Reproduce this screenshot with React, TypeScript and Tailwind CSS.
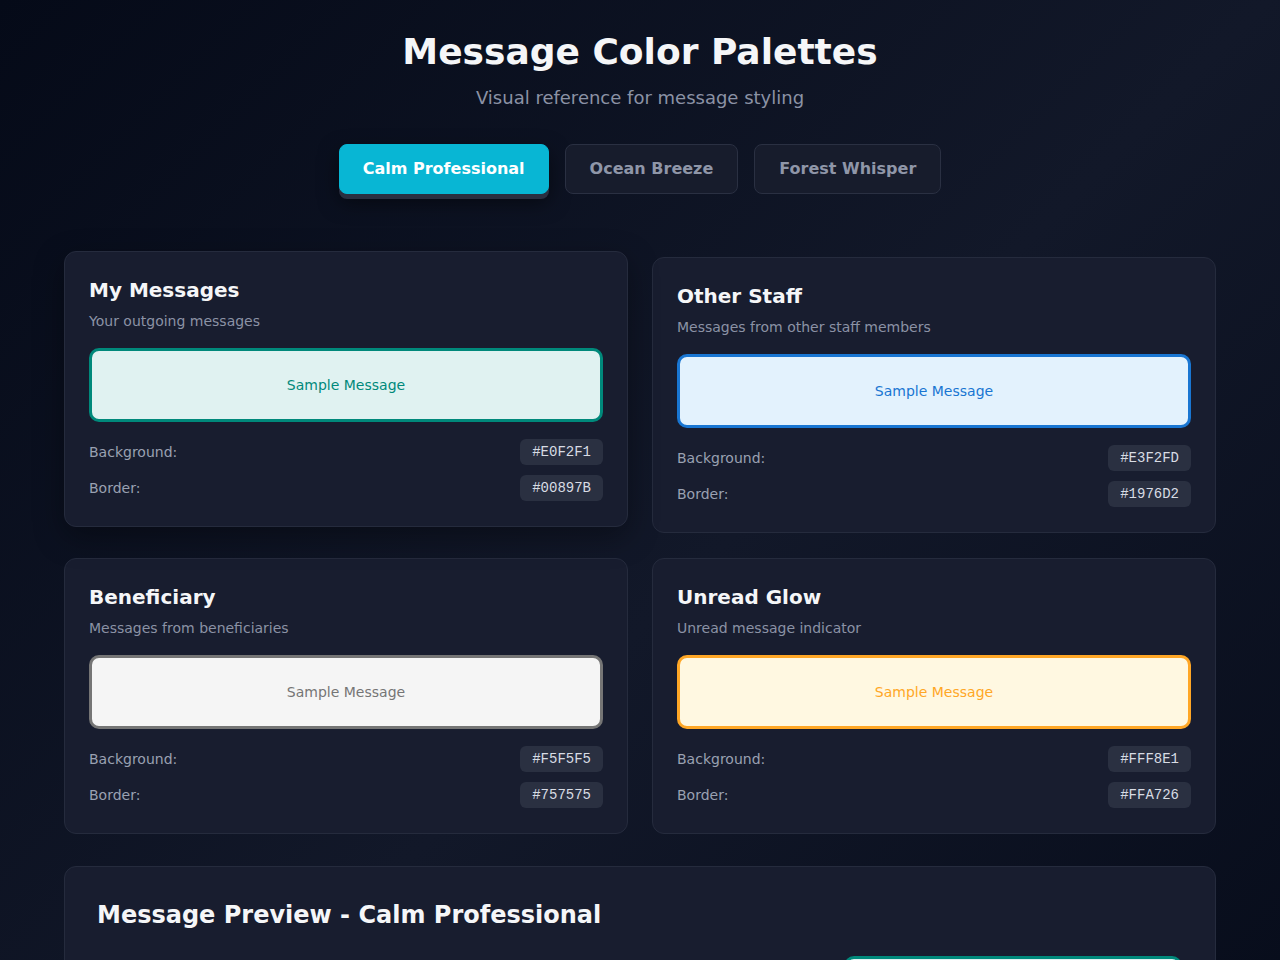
import React from "react";

type Palette = {
  title: string;
  subtitle: string;
  bg: string;
  border: string;
  boxClass: string;
  textClass: string;
  lifted?: boolean;
};

const palettes: Palette[] = [
  {
    title: "My Messages",
    subtitle: "Your outgoing messages",
    bg: "#E0F2F1",
    border: "#00897B",
    boxClass: "bg-[#E0F2F1] border-[#00897B]",
    textClass: "text-[#00897B]",
    lifted: true,
  },
  {
    title: "Other Staff",
    subtitle: "Messages from other staff members",
    bg: "#E3F2FD",
    border: "#1976D2",
    boxClass: "bg-[#E3F2FD] border-[#1976D2]",
    textClass: "text-[#1976D2]",
  },
  {
    title: "Beneficiary",
    subtitle: "Messages from beneficiaries",
    bg: "#F5F5F5",
    border: "#757575",
    boxClass: "bg-[#F5F5F5] border-[#757575]",
    textClass: "text-[#757575]",
  },
  {
    title: "Unread Glow",
    subtitle: "Unread message indicator",
    bg: "#FFF8E1",
    border: "#FFA726",
    boxClass: "bg-[#FFF8E1] border-[#FFA726]",
    textClass: "text-[#FFA726]",
  },
];

function PaletteCard({ p }: { p: Palette }) {
  return (
    <div
      className={
        "rounded-xl border border-[#252b3d] bg-[#181d2f] px-6 pt-6 pb-[25px] " +
        (p.lifted ? "-translate-y-1.5 shadow-[0_10px_30px_rgba(0,0,0,0.35)]" : "")
      }
    >
      <h2 className="text-xl leading-7 font-bold text-[#f5f6f8]">{p.title}</h2>
      <p className="mt-[7px] text-sm leading-5 text-[#8b92a5]">{p.subtitle}</p>
      <div
        className={
          "mt-[17px] rounded-[10px] border-[3px] py-6 text-center text-sm leading-5 " +
          p.boxClass
        }
      >
        <span className={p.textClass}>Sample Message</span>
      </div>
      <div className="mt-[17px] flex flex-col gap-2.5">
        <div className="flex items-center justify-between">
          <span className="text-sm text-[#9aa1b2]">Background:</span>
          <span className="rounded-md bg-[#2a3041] px-3 py-[3px] font-['Liberation_Mono',monospace] text-sm leading-5 text-[#d8dce4]">
            {p.bg}
          </span>
        </div>
        <div className="flex items-center justify-between">
          <span className="text-sm text-[#9aa1b2]">Border:</span>
          <span className="rounded-md bg-[#2a3041] px-3 py-[3px] font-['Liberation_Mono',monospace] text-sm leading-5 text-[#d8dce4]">
            {p.border}
          </span>
        </div>
      </div>
    </div>
  );
}

export default function App() {
  return (
    <div className="min-h-screen bg-[linear-gradient(135deg,#050a18_0%,#121829_50%,#050a18_100%)] font-['DejaVu_Sans',sans-serif] text-white">
      <div className="mx-auto max-w-6xl pt-8 pb-16">
        <h1 className="text-center text-4xl leading-10 font-bold text-[#f5f6f8]">
          Message Color Palettes
        </h1>
        <p className="mt-3 text-center text-lg leading-7 text-[#8b92a5]">
          Visual reference for message styling
        </p>

        <div className="mt-8 flex justify-center gap-4">
          <button className="rounded-lg border border-[#06b6d4] bg-[#08b6d4] px-[23px] py-3 text-base leading-6 font-bold text-white shadow-[0_5px_0_#2a2f40,0_8px_20px_rgba(0,0,0,0.5)]">
            Calm Professional
          </button>
          <button className="rounded-lg border border-[#2a3042] bg-[#171c2c] px-6 py-3 text-base leading-6 font-bold text-[#8f96a8]">
            Ocean Breeze
          </button>
          <button className="rounded-lg border border-[#2a3042] bg-[#171c2c] px-6 py-3 text-base leading-6 font-bold text-[#8f96a8]">
            Forest Whisper
          </button>
        </div>

        <div className="mt-[63px] grid grid-cols-2 gap-x-6 gap-y-[25px]">
          {palettes.map((p) => (
            <PaletteCard key={p.title} p={p} />
          ))}
        </div>

        <div className="mt-8 rounded-xl border border-[#252b3d] bg-[#181d2f] p-8">
          <h2 className="text-2xl leading-8 font-bold text-[#f5f6f8]">
            Message Preview - Calm Professional
          </h2>
          <div className="mt-[25px] flex flex-col gap-4">
            <div className="flex justify-end pr-px">
              <div className="w-[338px] rounded-[10px] border-[3px] border-[#00897B] bg-[#E0F2F1] px-4 py-3 text-sm text-[#00897B]">
                Hi! Just checking in on how things are going this week.
              </div>
            </div>
            <div className="flex justify-start">
              <div className="w-[338px] rounded-[10px] border-[3px] border-[#1976D2] bg-[#E3F2FD] px-4 py-3 text-sm text-[#1976D2]">
                All good here, thanks for asking.
              </div>
            </div>
            <div className="flex justify-start">
              <div className="w-[338px] rounded-[10px] border-[3px] border-[#757575] bg-[#F5F5F5] px-4 py-3 text-sm text-[#757575]">
                Could we reschedule our appointment?
              </div>
            </div>
          </div>
        </div>
      </div>
    </div>
  );
}
